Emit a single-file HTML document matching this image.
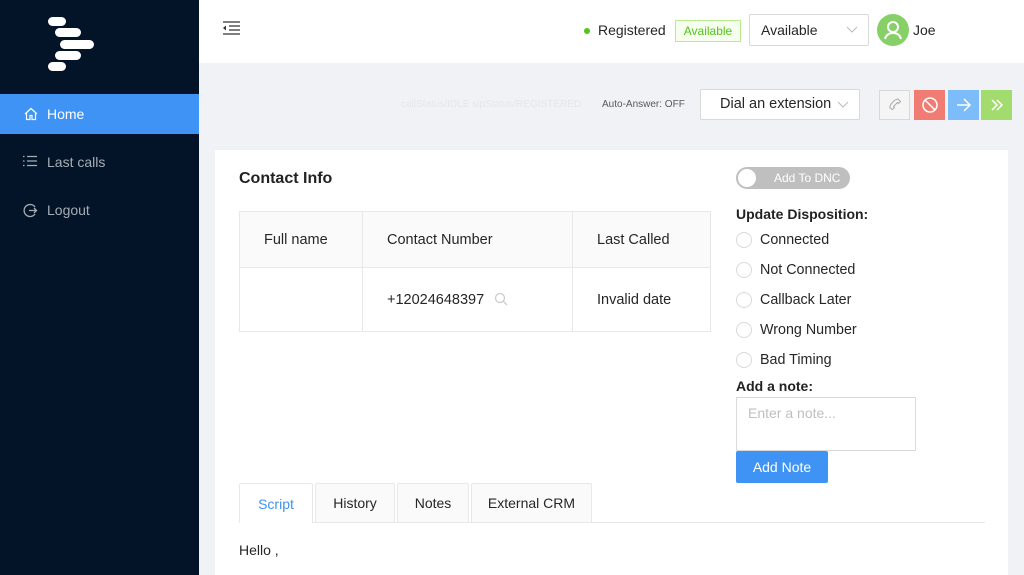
<!DOCTYPE html>
<html><head><meta charset="utf-8"><style>
*{box-sizing:border-box;margin:0;padding:0}
body{width:1024px;height:575px;overflow:hidden;background:#f0f2f5;font-family:"Liberation Sans",sans-serif;color:#262626;position:relative;font-size:14px}
.abs{position:absolute}
.side{left:0;top:0;width:199px;height:575px;background:#031428}
.logo span{position:absolute;height:9px;border-radius:5px;background:#fff}
.nav{left:0;width:199px;height:40px;color:#a6adb4;font-size:14px;display:flex;align-items:center;padding-left:47px}
.hdr{left:199px;top:0;width:825px;height:63px;background:#fff}
.card{left:215px;top:150px;width:793px;height:425px;background:#fff}
table{border-collapse:collapse}
td{border:1px solid #e8e8e8;padding-left:24px;font-size:14.5px}
.radio{display:flex;align-items:center;height:30px;font-size:14.3px}
.radio i{width:16px;height:16px;border:1px solid #d9d9d9;border-radius:50%;margin-right:8px;display:inline-block}
.tab{top:483px;height:39px;border:1px solid #e8e8e8;border-bottom:none;background:#fafafa;display:flex;align-items:center;justify-content:center;font-size:14px;border-radius:2px 2px 0 0}
.btn{top:90px;width:31px;height:30px;display:flex;align-items:center;justify-content:center}
</style></head><body>
<div class="abs side">
 <div class="abs logo" style="left:0;top:0">
  <span style="left:48px;top:17px;width:18px"></span>
  <span style="left:55px;top:28px;width:26px"></span>
  <span style="left:60px;top:40px;width:34px"></span>
  <span style="left:55px;top:51px;width:26px"></span>
  <span style="left:48px;top:62px;width:18px"></span>
 </div>
 <div class="abs nav" style="top:94px;background:#3f93f5;color:#fff">Home</div>
 <svg class="abs" style="left:23px;top:106px" width="16" height="16" viewBox="0 0 16 16" fill="none" stroke="#fff" stroke-width="1.2"><path d="M2 8L8 2.5 14 8M3.5 7v6.5h3.5v-4h2v4h3.5V7"/></svg>
 <div class="abs nav" style="top:142px">Last calls</div>
 <svg class="abs" style="left:23px;top:155px" width="14" height="12" viewBox="0 0 14 12" stroke="#a6adb4" stroke-width="1.2"><path d="M0 1.5h1.5M4 1.5h10M0 6h1.5M4 6h10M0 10.5h1.5M4 10.5h10"/></svg>
 <div class="abs nav" style="top:190px">Logout</div>
 <svg class="abs" style="left:23px;top:203px" width="15" height="15" viewBox="0 0 15 15" fill="none" stroke="#a6adb4" stroke-width="1.3"><path d="M12 4A6 6 0 1 0 12 11M6 7.5h7.5M11 5l2.5 2.5L11 10"/></svg>
</div>
<div class="abs hdr">
 <svg class="abs" style="left:24px;top:21px" width="17" height="14" viewBox="0 0 17 14" stroke="#333" stroke-width="1.3" fill="#333"><path d="M0 1h17M6 5h11M6 9h11M0 13h17" fill="none"/><path d="M0 7l3-2.5v5z" stroke="none"/></svg>
 <div class="abs" style="left:385px;top:28px;width:6px;height:6px;border-radius:50%;background:#52c41a"></div>
 <div class="abs" style="left:399px;top:22px;font-size:14px">Registered</div>
 <div class="abs" style="left:476px;top:20px;width:66px;height:22px;border:1px solid #b7eb8f;background:#f6ffed;color:#52c41a;font-size:12px;text-align:center;line-height:20px">Available</div>
 <div class="abs" style="left:550px;top:14px;width:120px;height:32px;border:1px solid #d9d9d9;border-radius:2px;padding-left:11px;line-height:30px;font-size:14px">Available<svg class="abs" style="right:10px;top:11px" width="12" height="8" viewBox="0 0 12 8" fill="none" stroke="#bbb"><path d="M1 1l5 5 5-5"/></svg></div>
 <div class="abs" style="left:678px;top:14px;width:32px;height:32px;border-radius:50%;background:#87d068"><svg width="32" height="32" viewBox="0 0 32 32" fill="none" stroke="#fff" stroke-width="2"><circle cx="16" cy="13" r="5"/><path d="M8 25c1-4 4-6 8-6s7 2 8 6"/></svg></div>
 <div class="abs" style="left:714px;top:22px;font-size:14px">Joe</div>
</div>
<div class="abs" style="left:401px;top:99px;font-size:10px;color:#e4e6ea">callStatus/IDLE sipStatus/REGISTERED</div>
<div class="abs" style="left:602px;top:99px;font-size:10px;color:#595959">Auto-Answer: OFF</div>
<div class="abs" style="left:700px;top:89px;width:160px;height:31px;background:#fff;border:1px solid #d9d9d9;border-radius:2px;padding-left:19px;line-height:29px;font-size:14.5px">Dial an extension<svg class="abs" style="right:10px;top:11px" width="12" height="8" viewBox="0 0 12 8" fill="none" stroke="#bbb"><path d="M1 1l5 5 5-5"/></svg></div>
<div class="abs btn" style="left:879px;width:31px;background:#f5f5f5;border:1px solid #d9d9d9"><svg width="14" height="14" viewBox="0 0 14 14" fill="none" stroke="#aaa"><path d="M10 1l2.5 2.5-2 2-1-1-4 4 1 1-2 2L2 10C1 7 7 1 10 1z"/></svg></div>
<div class="abs btn" style="left:914px;background:#f07c74"><svg width="18" height="18" viewBox="0 0 18 18" fill="none" stroke="#fff" stroke-width="1.5"><circle cx="9" cy="9" r="7"/><path d="M4 4l10 10"/></svg></div>
<div class="abs btn" style="left:948px;background:#7cbcf9"><svg width="16" height="14" viewBox="0 0 16 14" fill="none" stroke="#fff" stroke-width="1.5"><path d="M1 7h13M8 1l6 6-6 6"/></svg></div>
<div class="abs btn" style="left:981px;background:#a3dc6e"><svg width="16" height="14" viewBox="0 0 16 14" fill="none" stroke="#fff" stroke-width="1.5"><path d="M3 2l5 5-5 5M8 2l5 5-5 5"/></svg></div>
<div class="abs card"></div>
<div class="abs" style="left:239px;top:170px;font-size:16px;font-weight:bold;color:#222">Contact Info</div>
<table class="abs" style="left:239px;top:211px;width:472px">
 <tr style="height:56px;background:#fafafa"><td style="width:123px">Full name</td><td style="width:210px">Contact Number</td><td>Last Called</td></tr>
 <tr style="height:64px"><td></td><td>+12024648397 <svg style="vertical-align:-2px;margin-left:6px" width="14" height="14" viewBox="0 0 14 14" fill="none" stroke="#ccc" stroke-width="1.3"><circle cx="6" cy="6" r="4.5"/><path d="M9.5 9.5l3.5 3.5"/></svg></td><td>Invalid date</td></tr>
</table>
<div class="abs" style="left:736px;top:167px;width:114px;height:22px;border-radius:11px;background:#bfbfbf;color:#fff;font-size:12px;line-height:22px;padding-left:38px">Add To DNC<div class="abs" style="left:2px;top:2px;width:18px;height:18px;border-radius:50%;background:#fff"></div></div>
<div class="abs" style="left:736px;top:206px;font-size:14px;font-weight:bold;color:#222">Update Disposition:</div>
<div class="abs" style="left:736px;top:225px">
 <div class="radio"><i></i>Connected</div>
 <div class="radio"><i></i>Not Connected</div>
 <div class="radio"><i></i>Callback Later</div>
 <div class="radio"><i></i>Wrong Number</div>
 <div class="radio"><i></i>Bad Timing</div>
</div>
<div class="abs" style="left:736px;top:378px;font-size:14px;font-weight:bold;color:#222">Add a note:</div>
<div class="abs" style="left:736px;top:397px;width:180px;height:54px;border:1px solid #d9d9d9;padding:7px 11px;color:#bfbfbf;font-size:14px">Enter a note...</div>
<div class="abs" style="left:736px;top:451px;width:92px;height:32px;background:#3f93f5;color:#fff;font-size:14px;text-align:center;line-height:32px;border-radius:2px">Add Note</div>
<div class="abs" style="left:239px;top:522px;width:746px;height:1px;background:#e8e8e8"></div>
<div class="abs tab" style="left:239px;width:74px;background:#fff;color:#3f93f5;height:40px">Script</div>
<div class="abs tab" style="left:315px;width:80px">History</div>
<div class="abs tab" style="left:397px;width:72px">Notes</div>
<div class="abs tab" style="left:471px;width:121px">External CRM</div>
<div class="abs" style="left:239px;top:542px;font-size:14px">Hello ,</div>
</body></html>
